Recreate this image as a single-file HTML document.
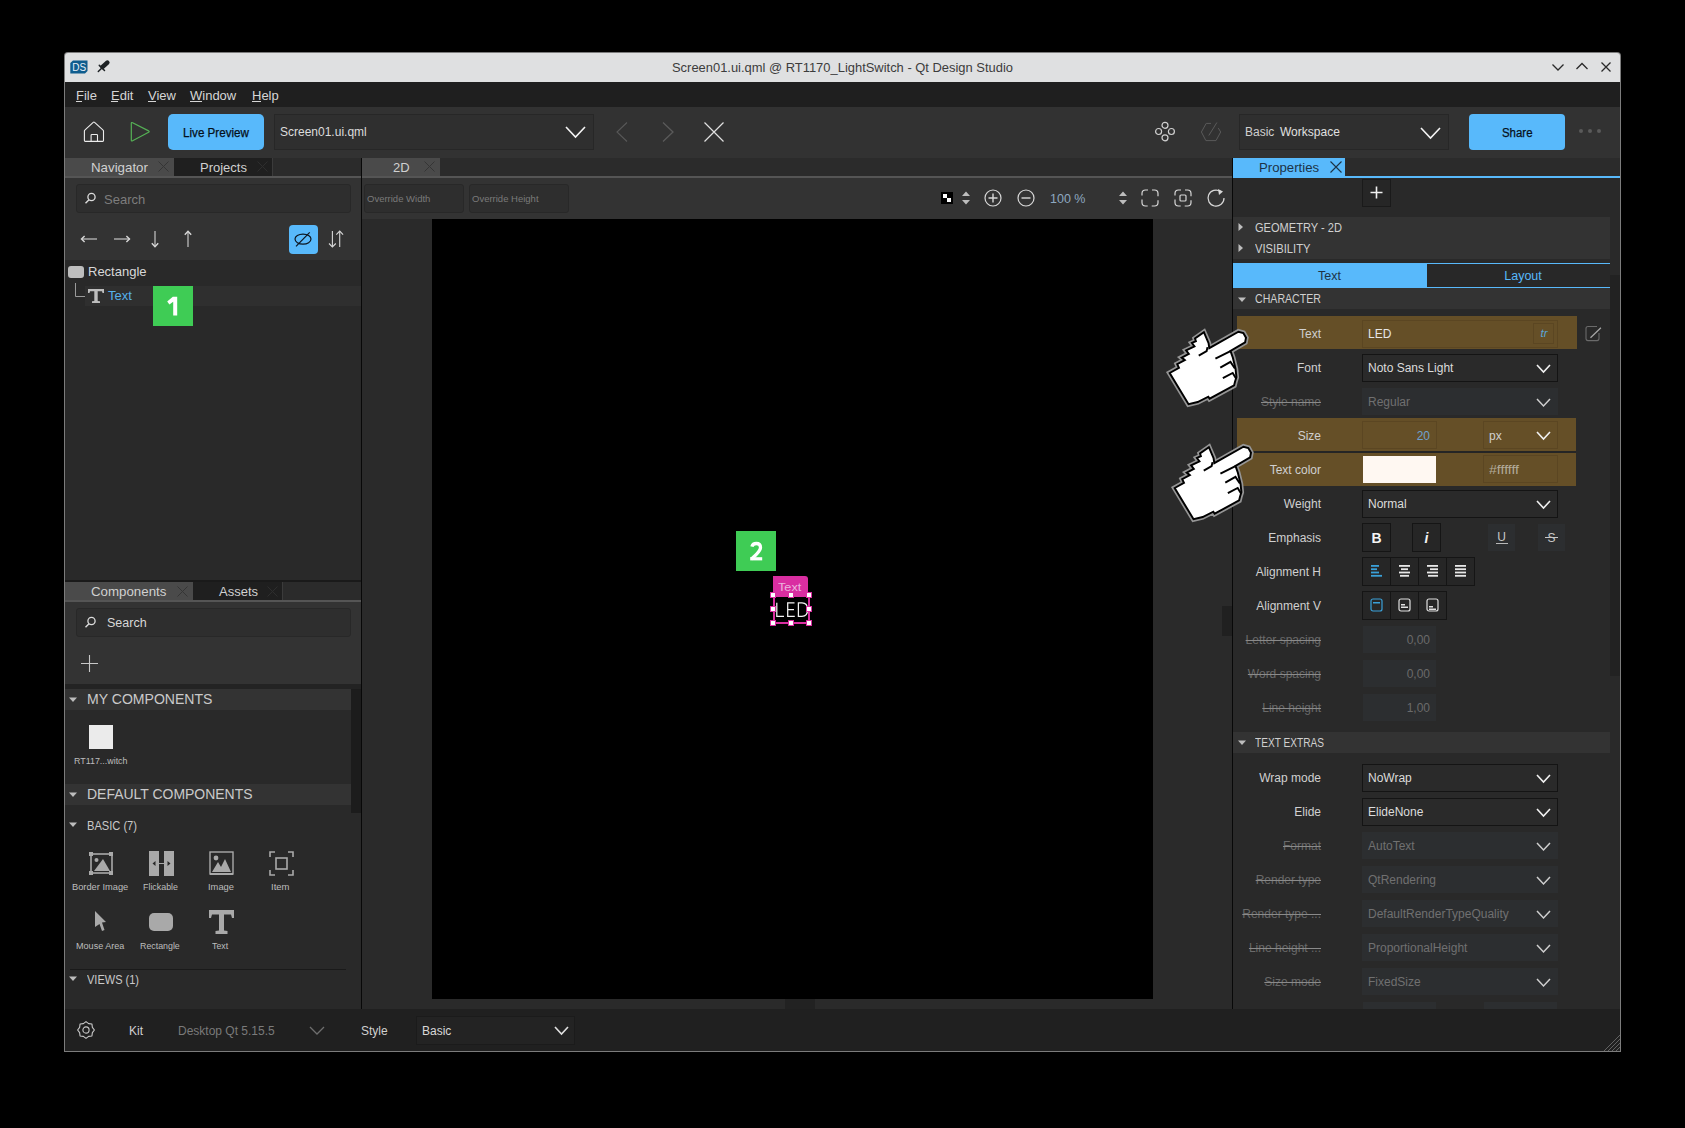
<!DOCTYPE html>
<html><head><meta charset="utf-8">
<style>
*{box-sizing:border-box;margin:0;padding:0}
html,body{width:1685px;height:1128px;overflow:hidden;background:#000;font-family:"Liberation Sans",sans-serif;font-size:12px;color:#d6d6d6}
.a{position:absolute}
.t{position:absolute;white-space:pre;line-height:1}
svg.a{overflow:visible}
</style></head><body>
<div class="a" style="left:64px;top:52px;width:1557px;height:1000px;background:#7c7c7c;border-radius:4px 4px 0 0"></div>
<div class="a" style="left:65px;top:53px;width:1555px;height:29px;background:#dfe0e1;border-radius:3px 3px 0 0"></div>
<svg class="a" style="left:70px;top:60px" width="18" height="14" viewBox="0 0 18 14"><path d="M3,0.5 L17.5,0.5 L17.5,11 L15,13.5 L0.3,13.5 L0.3,3 Z" fill="#0f5d8e"/><text x="9.2" y="10.8" font-family="Liberation Sans" font-size="10" fill="#e8f0f8" text-anchor="middle">DS</text></svg>
<svg class="a" style="left:97px;top:60px;" width="14" height="14" viewBox="0 0 14 14"><path d="M5.6,6.9 L10.3,2.6" stroke="#1e2225" stroke-width="4.6" stroke-linecap="round"/><path d="M2.3,5.4 L7.5,10.5 M1.3,11.5 L4.6,8.2" stroke="#1e2225" stroke-width="1.5" stroke-linecap="round"/></svg>
<div class="t" style="left:672px;top:61.3px;font-size:13px;color:#3c3c3c;transform:scaleX(0.9943);transform-origin:left;">Screen01.ui.qml @ RT1170_LightSwitch - Qt Design Studio</div>
<svg class="a" style="left:1550px;top:62px;" width="16" height="10" viewBox="0 0 16 10"><polyline points="2.5,2.5 8,8 13.5,2.5" fill="none" stroke="#2a2a2a" stroke-width="1.3"/></svg>
<svg class="a" style="left:1574px;top:61px;" width="16" height="10" viewBox="0 0 16 10"><polyline points="2.5,8 8,2.5 13.5,8" fill="none" stroke="#2a2a2a" stroke-width="1.3"/></svg>
<svg class="a" style="left:1599px;top:60px;" width="14" height="14" viewBox="0 0 14 14"><path d="M2.5,2.5 L11.5,11.5 M11.5,2.5 L2.5,11.5" fill="none" stroke="#2a2a2a" stroke-width="1.3"/></svg>
<div class="a" style="left:65px;top:82px;width:1555px;height:25px;background:#1f1f1f;"></div>
<div class="t" style="left:76px;top:89.0px;font-size:13px;color:#d6d6d6;">File</div>
<div class="a" style="left:76px;top:101px;width:6px;height:1px;background:#d6d6d6;"></div>
<div class="t" style="left:111px;top:89.0px;font-size:13px;color:#d6d6d6;">Edit</div>
<div class="a" style="left:111px;top:101px;width:7px;height:1px;background:#d6d6d6;"></div>
<div class="t" style="left:148px;top:89.0px;font-size:13px;color:#d6d6d6;">View</div>
<div class="a" style="left:148px;top:101px;width:8px;height:1px;background:#d6d6d6;"></div>
<div class="t" style="left:190px;top:89.0px;font-size:13px;color:#d6d6d6;">Window</div>
<div class="a" style="left:190px;top:101px;width:12px;height:1px;background:#d6d6d6;"></div>
<div class="t" style="left:252px;top:89.0px;font-size:13px;color:#d6d6d6;">Help</div>
<div class="a" style="left:252px;top:101px;width:9px;height:1px;background:#d6d6d6;"></div>
<div class="a" style="left:65px;top:107px;width:1555px;height:51px;background:#323232;"></div>
<svg class="a" style="left:83px;top:121px;" width="22" height="22" viewBox="0 0 22 22"><path d="M1.4,19.6 L1.4,10 Q1.4,9.5 1.8,9.2 L10.2,1.3 Q10.9,0.7 11.6,1.3 L20.1,9.2 Q20.5,9.5 20.5,10 L20.5,19.6 Q20.5,20.4 19.7,20.4 L2.2,20.4 Q1.4,20.4 1.4,19.6 Z" fill="none" stroke="#ececec" stroke-width="1.1"/><path d="M8.1,20.4 L8.1,14.3 Q8.1,13.5 8.9,13.5 L13.7,13.5 Q14.5,13.5 14.5,14.3 L14.5,20.4" fill="none" stroke="#ececec" stroke-width="1.1"/></svg>
<svg class="a" style="left:129px;top:121px;" width="22" height="22" viewBox="0 0 22 22"><path d="M2.3,2.5 Q2.3,1 3.6,1.7 L19.6,9.9 Q20.8,10.6 19.6,11.3 L3.6,19.8 Q2.3,20.5 2.3,19 Z" fill="none" stroke="#55b055" stroke-width="1.2"/></svg>
<div class="a" style="left:168px;top:114px;width:96px;height:36px;background:#58b9fb;border-radius:5px"></div>
<div class="t" style="left:183px;top:126.84px;font-size:12px;color:#06101a;-webkit-text-stroke:0.25px #06101a;transform:scaleX(0.9702);transform-origin:left;">Live Preview</div>
<div class="a" style="left:274px;top:114px;width:320px;height:36px;background:#2f2f2f;border:1px solid #272727;border-radius:0px;"></div>
<div class="t" style="left:280px;top:125.84px;font-size:12px;color:#dcdcdc;">Screen01.ui.qml</div>
<svg class="a" style="left:564.0px;top:125.30000000000001px;" width="23" height="14" viewBox="0 0 23 14"><polyline points="2,2 11.5,12 21,2" fill="none" stroke="#f4f4f4" stroke-width="1.6"/></svg>
<svg class="a" style="left:614px;top:121px;" width="16" height="22" viewBox="0 0 16 22"><polyline points="13,1.5 3,11 13,20.5" fill="none" stroke="#585858" stroke-width="1.1"/></svg>
<svg class="a" style="left:660px;top:121px;" width="16" height="22" viewBox="0 0 16 22"><polyline points="3,1.5 13,11 3,20.5" fill="none" stroke="#5a5a5a" stroke-width="1.3"/></svg>
<svg class="a" style="left:703px;top:121px;" width="22" height="22" viewBox="0 0 22 22"><path d="M1.5,1.5 L20.5,20.5 M20.5,1.5 L1.5,20.5" stroke="#e0e0e0" stroke-width="1.2"/></svg>
<svg class="a" style="left:1154px;top:120px;" width="22" height="22" viewBox="0 0 22 22"><g fill="none" stroke="#d0d0d0" stroke-width="1.2"><circle cx="11" cy="5.3" r="3"/><circle cx="4.6" cy="11.5" r="3"/><circle cx="17.4" cy="11.5" r="3"/><circle cx="11" cy="17.8" r="3"/></g></svg>
<svg class="a" style="left:1200px;top:120px;" width="22" height="22" viewBox="0 0 22 22"><g fill="none" stroke="#5a5a5a" stroke-width="1"><path d="M11,3.4 L6.2,3.4 L1.4,12 L5.9,20.6 L16,20.6 L20.7,12 L18.3,8.1"/><path d="M8.8,15.5 L16.9,2.5"/></g></svg>
<div class="a" style="left:1239px;top:114px;width:210px;height:36px;background:#2f2f2f;border:1px solid #272727;border-radius:0px;"></div>
<div class="t" style="left:1245px;top:125.84px;font-size:12px;color:#cfcfcf;">Basic</div>
<div class="t" style="left:1280px;top:125.84px;font-size:12px;color:#e0e0e0;">Workspace</div>
<svg class="a" style="left:1419.0px;top:125.80000000000001px;" width="23" height="14" viewBox="0 0 23 14"><polyline points="2,2 11.5,12 21,2" fill="none" stroke="#f4f4f4" stroke-width="1.6"/></svg>
<div class="a" style="left:1469px;top:114px;width:96px;height:36px;background:#58b9fb;border-radius:4px"></div>
<div class="t" style="left:1502px;top:126.84px;font-size:12px;color:#06101a;-webkit-text-stroke:0.25px #06101a;transform:scaleX(0.9524);transform-origin:left;">Share</div>
<div class="a" style="left:1579px;top:129px;width:4px;height:4px;background:#5a5a5a;border-radius:2px"></div>
<div class="a" style="left:1588px;top:129px;width:4px;height:4px;background:#5a5a5a;border-radius:2px"></div>
<div class="a" style="left:1597px;top:129px;width:4px;height:4px;background:#5a5a5a;border-radius:2px"></div>
<div class="a" style="left:65px;top:1009px;width:1555px;height:42px;background:#202020;"></div>
<svg class="a" style="left:75.5px;top:1020.3px;" width="20" height="20" viewBox="0 0 20 20"><g fill="none" stroke="#c8c8c8" stroke-width="1.1" stroke-linejoin="round"><polygon points="10.00,1.60 12.64,3.63 15.94,4.06 16.37,7.36 18.40,10.00 16.37,12.64 15.94,15.94 12.64,16.37 10.00,18.40 7.36,16.37 4.06,15.94 3.63,12.64 1.60,10.00 3.63,7.36 4.06,4.06 7.36,3.63"/><circle cx="10" cy="10" r="3.1"/></g></svg>
<div class="t" style="left:129px;top:1024.84px;font-size:12px;color:#d0d0d0;">Kit</div>
<div class="t" style="left:178px;top:1024.84px;font-size:12px;color:#7a7a7a;">Desktop Qt 5.15.5</div>
<svg class="a" style="left:308.0px;top:1024.5px;" width="18" height="11" viewBox="0 0 18 11"><polyline points="2,2 9.0,9 16,2" fill="none" stroke="#6e6e6e" stroke-width="1.3"/></svg>
<div class="t" style="left:361px;top:1024.84px;font-size:12px;color:#d0d0d0;">Style</div>
<div class="a" style="left:416px;top:1016px;width:159px;height:29px;background:#232323;border:1px solid #1b1b1b;border-radius:0px;"></div>
<div class="t" style="left:422px;top:1024.84px;font-size:12px;color:#d8d8d8;">Basic</div>
<svg class="a" style="left:552.5px;top:1024.5px;" width="17" height="11" viewBox="0 0 17 11"><polyline points="2,2 8.5,9 15,2" fill="none" stroke="#e0e0e0" stroke-width="1.6"/></svg>
<div class="a" style="left:65px;top:158px;width:296px;height:18px;background:#2b2b2b;"></div>
<div class="a" style="left:65px;top:158px;width:109px;height:18px;background:#4a4a4a;"></div>
<div class="a" style="left:174px;top:158px;width:98px;height:18px;background:#1f1f1f;"></div>
<div class="a" style="left:272px;top:158px;width:1px;height:18px;background:#3b3b3b;"></div>
<div class="t" style="left:91px;top:160.74px;font-size:13.3px;color:#d0d0d0;">Navigator</div>
<svg class="a" style="left:158px;top:161px;" width="11" height="11" viewBox="0 0 11 11"><path d="M0.5,0.5 L10.5,10.5 M10.5,0.5 L0.5,10.5" stroke="#353535" stroke-width="1"/></svg>
<div class="t" style="left:200px;top:161.0px;font-size:13px;color:#d0d0d0;">Projects</div>
<svg class="a" style="left:257px;top:161px;" width="11" height="11" viewBox="0 0 11 11"><path d="M0.5,0.5 L10.5,10.5 M10.5,0.5 L0.5,10.5" stroke="#2e2e2e" stroke-width="1"/></svg>
<div class="a" style="left:65px;top:176px;width:296px;height:2px;background:#555;"></div>
<div class="a" style="left:65px;top:178px;width:296px;height:82px;background:#333;"></div>
<div class="a" style="left:76px;top:184px;width:275px;height:29px;background:#2e2e2e;border:1px solid #282828;border-radius:3px;"></div>
<svg class="a" style="left:84px;top:192px;" width="13" height="13" viewBox="0 0 13 13"><circle cx="7.5" cy="5" r="3.6" fill="none" stroke="#dcdcdc" stroke-width="1.3"/><path d="M5,7.8 L1.5,11.3" stroke="#dcdcdc" stroke-width="1.4"/></svg>
<div class="t" style="left:104px;top:193.0px;font-size:13px;color:#7d7d7d;">Search</div>
<svg class="a" style="left:75px;top:229px;" width="30" height="20" viewBox="0 0 30 20"><path d="M7,10 L22,10" stroke="#a8a8a8" stroke-width="1.5"/><polyline points="9.6,7 6.5,10 9.6,13" fill="none" stroke="#d8d8d8" stroke-width="1.4"/></svg>
<svg class="a" style="left:108px;top:229px;" width="30" height="20" viewBox="0 0 30 20"><path d="M6,10 L21.5,10" stroke="#a8a8a8" stroke-width="1.5"/><polyline points="18.4,7 21.5,10 18.4,13" fill="none" stroke="#d8d8d8" stroke-width="1.4"/></svg>
<svg class="a" style="left:145px;top:225px;" width="20" height="30" viewBox="0 0 20 30"><path d="M10,6 L10,21.5" stroke="#a8a8a8" stroke-width="1.5"/><polyline points="6.8,18.3 10,21.8 13.2,18.3" fill="none" stroke="#d8d8d8" stroke-width="1.4"/></svg>
<svg class="a" style="left:178px;top:225px;" width="20" height="30" viewBox="0 0 20 30"><path d="M10,6.5 L10,22" stroke="#a8a8a8" stroke-width="1.5"/><polyline points="6.8,9.7 10,6.2 13.2,9.7" fill="none" stroke="#d8d8d8" stroke-width="1.4"/></svg>
<div class="a" style="left:289px;top:225px;width:29px;height:29px;background:#58b9fb;border-radius:4px"></div>
<svg class="a" style="left:289px;top:225px;" width="29" height="29" viewBox="0 0 29 29"><ellipse cx="14" cy="14.1" rx="8" ry="5" fill="none" stroke="#0d1620" stroke-width="1.2"/><path d="M7,21.4 L20.7,7.3" stroke="#0d1620" stroke-width="1.2"/></svg>
<svg class="a" style="left:326px;top:230px;" width="20" height="19" viewBox="0 0 20 19"><g fill="none" stroke="#d8d8d8" stroke-width="1.1"><path d="M6.4,1 L6.4,17"/><polyline points="3,13.5 6.4,17 9.8,13.5"/><path d="M13.7,1.2 L13.7,17"/><polyline points="10.3,4.6 13.7,1.1 17.1,4.6"/></g></svg>
<div class="a" style="left:65px;top:260px;width:296px;height:320px;background:#292929;"></div>
<div class="a" style="left:68px;top:266px;width:16px;height:12px;background:#bdbdbd;border-radius:3px"></div>
<div class="t" style="left:88px;top:265.0px;font-size:13px;color:#d8d8d8;">Rectangle</div>
<div class="a" style="left:85px;top:286px;width:276px;height:20px;background:#2f2f2f;"></div>
<svg class="a" style="left:74px;top:283px;" width="12" height="15" viewBox="0 0 12 15"><path d="M1.5,0 L1.5,13.5 L11,13.5" fill="none" stroke="#9a9a9a" stroke-width="1"/></svg>
<svg class="a" style="left:87px;top:288px;" width="18" height="16" viewBox="0 0 18 16"><path d="M1,1 L17,1 L17,5 L15.5,5 L15,3.3 L10.7,3.3 L10.7,13 L13,13.3 L13,15 L5,15 L5,13.3 L7.3,13 L7.3,3.3 L3,3.3 L2.5,5 L1,5 Z" fill="#bdbdbd"/></svg>
<div class="t" style="left:108px;top:289.0px;font-size:13px;color:#56b0ea;">Text</div>
<div class="a" style="left:65px;top:580px;width:296px;height:2px;background:#1a1a1a;"></div>
<div class="a" style="left:65px;top:582px;width:296px;height:18px;background:#2b2b2b;"></div>
<div class="a" style="left:65px;top:582px;width:128px;height:18px;background:#4a4a4a;"></div>
<div class="a" style="left:193px;top:582px;width:89px;height:18px;background:#1f1f1f;"></div>
<div class="a" style="left:282px;top:582px;width:1px;height:18px;background:#3b3b3b;"></div>
<div class="t" style="left:91px;top:584.74px;font-size:13.3px;color:#d0d0d0;">Components</div>
<svg class="a" style="left:177px;top:586px;" width="11" height="11" viewBox="0 0 11 11"><path d="M0.5,0.5 L10.5,10.5 M10.5,0.5 L0.5,10.5" stroke="#353535" stroke-width="1"/></svg>
<div class="t" style="left:219px;top:585.0px;font-size:13px;color:#d0d0d0;">Assets</div>
<svg class="a" style="left:267px;top:586px;" width="11" height="11" viewBox="0 0 11 11"><path d="M0.5,0.5 L10.5,10.5 M10.5,0.5 L0.5,10.5" stroke="#2e2e2e" stroke-width="1"/></svg>
<div class="a" style="left:65px;top:600px;width:296px;height:2px;background:#555;"></div>
<div class="a" style="left:65px;top:602px;width:296px;height:82px;background:#333;"></div>
<div class="a" style="left:76px;top:608px;width:275px;height:29px;background:#2e2e2e;border:1px solid #282828;border-radius:3px;"></div>
<svg class="a" style="left:84px;top:616px;" width="13" height="13" viewBox="0 0 13 13"><circle cx="7.5" cy="5" r="3.6" fill="none" stroke="#dcdcdc" stroke-width="1.3"/><path d="M5,7.8 L1.5,11.3" stroke="#dcdcdc" stroke-width="1.4"/></svg>
<div class="t" style="left:107px;top:616.92px;font-size:12.5px;color:#d8d8d8;">Search</div>
<svg class="a" style="left:80px;top:654px;" width="19" height="19" viewBox="0 0 19 19"><path d="M9.5,1 L9.5,18 M1,9.5 L18,9.5" stroke="#c8c8c8" stroke-width="1.1"/></svg>
<div class="a" style="left:65px;top:684px;width:296px;height:5px;background:#232323;"></div>
<div class="a" style="left:65px;top:689px;width:296px;height:320px;background:#292929;"></div>
<div class="a" style="left:351px;top:689px;width:10px;height:124px;background:#1c1c1c;"></div>
<div class="a" style="left:65px;top:689px;width:286px;height:21px;background:#333;"></div>
<svg class="a" style="left:69px;top:697px;" width="9" height="6" viewBox="0 0 9 6"><path d="M0,0.5 L8,0.5 L4,5 Z" fill="#bdbdbd"/></svg>
<div class="t" style="left:87px;top:692.23px;font-size:14.5px;color:#cacaca;transform:scaleX(0.9695);transform-origin:left;">MY COMPONENTS</div>
<div class="a" style="left:89px;top:725px;width:24px;height:24px;background:#ebebeb;"></div>
<div class="t" style="left:74px;top:755.96px;font-size:9.5px;color:#bdbdbd;transform:scaleX(0.9353);transform-origin:left;">RT117...witch</div>
<div class="a" style="left:65px;top:784px;width:286px;height:21px;background:#333;"></div>
<svg class="a" style="left:69px;top:792px;" width="9" height="6" viewBox="0 0 9 6"><path d="M0,0.5 L8,0.5 L4,5 Z" fill="#bdbdbd"/></svg>
<div class="t" style="left:87px;top:787.23px;font-size:14.5px;color:#cacaca;transform:scaleX(0.9629);transform-origin:left;">DEFAULT COMPONENTS</div>
<svg class="a" style="left:69px;top:822px;" width="9" height="6" viewBox="0 0 9 6"><path d="M0,0.5 L8,0.5 L4,5 Z" fill="#bdbdbd"/></svg>
<div class="t" style="left:87px;top:819.66px;font-size:12.8px;color:#cacaca;transform:scaleX(0.8678);transform-origin:left;">BASIC (7)</div>
<svg class="a" style="left:89px;top:851px;" width="25" height="25" viewBox="0 0 25 25"><g fill="#a9a9a9"><rect x="2" y="3" width="21" height="19" fill="none" stroke="#a9a9a9" stroke-width="1.6"/><rect x="0" y="1" width="4" height="4"/><rect x="20" y="1" width="4" height="4"/><rect x="0" y="20" width="4" height="4"/><rect x="20" y="20" width="4" height="4"/><circle cx="7.5" cy="9" r="2"/><path d="M5,20 L14,8 L21,20 Z"/></g></svg>
<svg class="a" style="left:149px;top:851px;" width="25" height="25" viewBox="0 0 25 25"><g fill="#a9a9a9"><rect x="0" y="0" width="10" height="25"/><rect x="15" y="0" width="10" height="25"/></g><path d="M3.5,12.5 L6.5,10 L6.5,15 Z M21.5,12.5 L18.5,10 L18.5,15 Z" fill="#292929"/><path d="M9.5,12.5 L15.5,12.5" stroke="#a9a9a9" stroke-width="1"/></svg>
<svg class="a" style="left:209px;top:851px;" width="25" height="25" viewBox="0 0 25 25"><g><rect x="1" y="1" width="23" height="22" fill="none" stroke="#a9a9a9" stroke-width="1.4"/><circle cx="7" cy="7" r="2.4" fill="#a9a9a9"/><path d="M3,21 L9,11 L12,16 L16,8 L22,21 Z" fill="#a9a9a9"/><rect x="1" y="22" width="23" height="2" fill="#a9a9a9"/></g></svg>
<svg class="a" style="left:269px;top:851px;" width="25" height="25" viewBox="0 0 25 25"><g fill="none" stroke="#a9a9a9" stroke-width="1.6"><path d="M1,6 L1,1 L6,1 M19,1 L24,1 L24,6 M24,19 L24,24 L19,24 M6,24 L1,24 L1,19"/><rect x="7" y="7" width="11" height="11"/></g></svg>
<div class="t" style="left:72.4px;top:881.87px;font-size:9.6px;color:#bdbdbd;transform:scaleX(0.9679);transform-origin:left;">Border Image</div>
<div class="t" style="left:143px;top:881.87px;font-size:9.6px;color:#bdbdbd;transform:scaleX(0.9239);transform-origin:left;">Flickable</div>
<div class="t" style="left:207.5px;top:881.87px;font-size:9.6px;color:#bdbdbd;transform:scaleX(0.9744);transform-origin:left;">Image</div>
<div class="t" style="left:271px;top:881.87px;font-size:9.6px;color:#bdbdbd;transform:scaleX(0.9909);transform-origin:left;">Item</div>
<svg class="a" style="left:94px;top:910px;" width="14" height="24" viewBox="0 0 14 24"><path d="M1,1 L12,12 L8,12.5 L10.5,20 L8,21 L5.5,14 L1,17 Z" fill="#a9a9a9"/></svg>
<div class="a" style="left:149px;top:913px;width:24px;height:18px;background:#a9a9a9;border-radius:5px"></div>
<svg class="a" style="left:209px;top:910px;" width="25" height="24" viewBox="0 0 25 24"><path d="M0,0 L25,0 L25,8 L23,8 L22,4.5 L15,4.5 L15,20.5 L18.5,21 L18.5,24 L6.5,24 L6.5,21 L10,20.5 L10,4.5 L3,4.5 L2,8 L0,8 Z" fill="#a9a9a9"/></svg>
<div class="t" style="left:76px;top:940.87px;font-size:9.6px;color:#bdbdbd;transform:scaleX(0.9447);transform-origin:left;">Mouse Area</div>
<div class="t" style="left:140.4px;top:940.87px;font-size:9.6px;color:#bdbdbd;transform:scaleX(0.9207);transform-origin:left;">Rectangle</div>
<div class="t" style="left:212.3px;top:940.87px;font-size:9.6px;color:#bdbdbd;transform:scaleX(0.9144);transform-origin:left;">Text</div>
<div class="a" style="left:70px;top:969px;width:276px;height:1px;background:#1a1a1a;"></div>
<svg class="a" style="left:69px;top:976px;" width="9" height="6" viewBox="0 0 9 6"><path d="M0,0.5 L8,0.5 L4,5 Z" fill="#bdbdbd"/></svg>
<div class="t" style="left:87px;top:973.66px;font-size:12.8px;color:#cacaca;transform:scaleX(0.8602);transform-origin:left;">VIEWS (1)</div>
<div class="a" style="left:361px;top:158px;width:1px;height:851px;background:#080808;"></div>
<div class="a" style="left:362px;top:158px;width:870px;height:18px;background:#2b2b2b;"></div>
<div class="a" style="left:362px;top:158px;width:78px;height:18px;background:#4a4a4a;"></div>
<div class="t" style="left:393px;top:161.0px;font-size:13px;color:#d0d0d0;">2D</div>
<svg class="a" style="left:424px;top:161px;" width="11" height="11" viewBox="0 0 11 11"><path d="M0.5,0.5 L10.5,10.5 M10.5,0.5 L0.5,10.5" stroke="#353535" stroke-width="1"/></svg>
<div class="a" style="left:362px;top:176px;width:870px;height:2px;background:#555;"></div>
<div class="a" style="left:362px;top:178px;width:870px;height:41px;background:#333;"></div>
<div class="a" style="left:364px;top:184px;width:100px;height:29px;background:#2e2e2e;border:1px solid #282828;border-radius:3px;"></div>
<div class="a" style="left:469px;top:184px;width:100px;height:29px;background:#2e2e2e;border:1px solid #282828;border-radius:3px;"></div>
<div class="t" style="left:367px;top:193.96px;font-size:9.5px;color:#7a7a7a;">Override Width</div>
<div class="t" style="left:472px;top:193.96px;font-size:9.5px;color:#7a7a7a;">Override Height</div>
<div class="a" style="left:941px;top:192px;width:12px;height:12px;background:#000;"></div>
<div class="a" style="left:943px;top:194px;width:4px;height:4px;background:#fff;"></div>
<div class="a" style="left:947px;top:198px;width:4px;height:4px;background:#fff;"></div>
<svg class="a" style="left:960.5px;top:190px;" width="10" height="16" viewBox="0 0 10 16"><path d="M1,6 L5,1.5 L9,6 Z M1,10 L5,14.5 L9,10 Z" fill="#bdbdbd"/></svg>
<svg class="a" style="left:983px;top:188px;" width="20" height="20" viewBox="0 0 20 20"><circle cx="10" cy="10" r="8" fill="none" stroke="#d8d8d8" stroke-width="1.2"/><path d="M10,5.5 L10,14.5 M5.5,10 L14.5,10" stroke="#d8d8d8" stroke-width="1.4"/></svg>
<svg class="a" style="left:1016px;top:188px;" width="20" height="20" viewBox="0 0 20 20"><circle cx="10" cy="10" r="8" fill="none" stroke="#d8d8d8" stroke-width="1.2"/><path d="M5.5,10 L14.5,10" stroke="#d8d8d8" stroke-width="1.4"/></svg>
<div class="t" style="left:1050px;top:193.42px;font-size:12.5px;color:#8ea8c0;">100 %</div>
<svg class="a" style="left:1117.5px;top:190px;" width="10" height="16" viewBox="0 0 10 16"><path d="M1,6 L5,1.5 L9,6 Z M1,10 L5,14.5 L9,10 Z" fill="#bdbdbd"/></svg>
<svg class="a" style="left:1140px;top:188px;" width="20" height="20" viewBox="0 0 20 20"><rect x="2" y="2" width="16" height="16" rx="3.5" fill="none" stroke="#d8d8d8" stroke-width="1.2" stroke-dasharray="10.5,4" stroke-dashoffset="8"/></svg>
<svg class="a" style="left:1173px;top:188px;" width="20" height="20" viewBox="0 0 20 20"><rect x="2" y="2" width="16" height="16" rx="3.5" fill="none" stroke="#d8d8d8" stroke-width="1.2" stroke-dasharray="10.5,4" stroke-dashoffset="8"/><rect x="7" y="7" width="6" height="6" rx="1" fill="none" stroke="#d8d8d8" stroke-width="1.2"/></svg>
<svg class="a" style="left:1206px;top:188px;" width="20" height="20" viewBox="0 0 20 20"><path d="M14.5,3.5 A8,8 0 1 0 18,10" fill="none" stroke="#d8d8d8" stroke-width="1.2"/><path d="M12,1 L17,3.5 L13,7 Z" fill="#d8d8d8"/></svg>
<div class="a" style="left:362px;top:219px;width:870px;height:790px;background:#2a2a2a;"></div>
<div class="a" style="left:432px;top:219px;width:721px;height:780px;background:#000;"></div>
<div class="a" style="left:785px;top:999px;width:30px;height:10px;background:#222;"></div>
<div class="a" style="left:1222px;top:606px;width:10px;height:30px;background:#202020;"></div>
<div class="a" style="left:736px;top:531px;width:40px;height:40px;background:#3fcc55;"></div>
<svg class="a" style="left:736px;top:531px;" width="40" height="40" viewBox="0 0 40 40"><path d="M15.9,15.6 C16.5,13.3 18.3,12.5 20.3,12.5 C23,12.5 24.5,14.3 24.5,16.6 C24.5,18.9 23.2,20.5 20.6,23.1 L15.6,28" fill="none" stroke="#fff" stroke-width="3.3"/><rect x="14.2" y="26.2" width="12" height="3.2" fill="#fff"/></svg>
<div class="a" style="left:773px;top:576px;width:35px;height:19px;background:#d92ea1;border-radius:0 3px 0 0"></div>
<div class="t" style="left:777.5px;top:581.69px;font-size:11px;color:#ecb4de;transform:scaleX(1.1550);transform-origin:left;">Text</div>
<svg class="a" style="left:770px;top:598px;" width="45" height="24" viewBox="0 0 45 24"><g fill="none" stroke="#f4f4f4" stroke-width="1.25"><path d="M6.8,4.8 L6.8,18.4 L14,18.4"/><path d="M24.5,4.8 L17.7,4.8 L17.7,18.4 L24.8,18.4 M17.7,11.6 L24,11.6"/><path d="M28.4,4.8 L28.4,18.4 L32,18.4 Q37.6,18.4 37.6,11.6 Q37.6,4.8 32,4.8 Z"/></g></svg>
<div class="a" style="left:773px;top:595px;width:37px;height:29px;background:transparent;border:2px solid #d92ea1"></div>
<div class="a" style="left:770px;top:592px;width:6px;height:6px;background:#fff;border:1px solid #d92ea1"></div>
<div class="a" style="left:770px;top:606px;width:6px;height:6px;background:#fff;border:1px solid #d92ea1"></div>
<div class="a" style="left:770px;top:620px;width:6px;height:6px;background:#fff;border:1px solid #d92ea1"></div>
<div class="a" style="left:788px;top:592px;width:6px;height:6px;background:#fff;border:1px solid #d92ea1"></div>
<div class="a" style="left:788px;top:620px;width:6px;height:6px;background:#fff;border:1px solid #d92ea1"></div>
<div class="a" style="left:806px;top:592px;width:6px;height:6px;background:#fff;border:1px solid #d92ea1"></div>
<div class="a" style="left:806px;top:606px;width:6px;height:6px;background:#fff;border:1px solid #d92ea1"></div>
<div class="a" style="left:806px;top:620px;width:6px;height:6px;background:#fff;border:1px solid #d92ea1"></div>
<div class="a" style="left:153px;top:286px;width:40px;height:40px;background:#3fcc55;"></div>
<svg class="a" style="left:153px;top:286px;" width="40" height="40" viewBox="0 0 40 40"><polygon points="19.8,10.8 24.2,10.8 24.2,29.6 20.2,29.6 20.2,15.8 16.4,18.6 14.2,15.6" fill="#fff"/></svg>
<div class="a" style="left:1232px;top:158px;width:1px;height:851px;background:#080808;"></div>
<div class="a" style="left:1233px;top:158px;width:387px;height:18px;background:#2b2b2b;"></div>
<div class="a" style="left:1233px;top:158px;width:112px;height:18px;background:#58b9fb;"></div>
<div class="t" style="left:1259px;top:160.83px;font-size:13.2px;color:#1d3346;">Properties</div>
<svg class="a" style="left:1330px;top:161px;" width="12" height="12" viewBox="0 0 12 12"><path d="M0.5,0.5 L11.5,11.5 M11.5,0.5 L0.5,11.5" stroke="#1d3346" stroke-width="1.1"/></svg>
<div class="a" style="left:1233px;top:176px;width:387px;height:2px;background:#58b9fb;"></div>
<div class="a" style="left:1233px;top:178px;width:387px;height:831px;background:#292929;"></div>
<div class="a" style="left:1362px;top:179px;width:29px;height:28px;background:#262626;border:1px solid #1a1a1a;border-radius:0px;"></div>
<svg class="a" style="left:1369px;top:185px;" width="15" height="15" viewBox="0 0 15 15"><path d="M7.5,1.5 L7.5,13.5 M1.5,7.5 L13.5,7.5" stroke="#f0f0f0" stroke-width="1.6"/></svg>
<div class="a" style="left:1233px;top:217px;width:377px;height:42px;background:#333;"></div>
<svg class="a" style="left:1238px;top:223px;" width="6" height="9" viewBox="0 0 6 9"><path d="M0.5,0 L5,4 L0.5,8 Z" fill="#bdbdbd"/></svg>
<div class="t" style="left:1255px;top:221.21px;font-size:13.1px;color:#d0d0d0;transform:scaleX(0.8456);transform-origin:left;">GEOMETRY - 2D</div>
<svg class="a" style="left:1238px;top:244px;" width="6" height="9" viewBox="0 0 6 9"><path d="M0.5,0 L5,4 L0.5,8 Z" fill="#bdbdbd"/></svg>
<div class="t" style="left:1255px;top:241.91px;font-size:13.1px;color:#d0d0d0;transform:scaleX(0.8565);transform-origin:left;">VISIBILITY</div>
<div class="a" style="left:1233px;top:263px;width:377px;height:1px;background:#58b9fb;"></div>
<div class="a" style="left:1233px;top:263px;width:194px;height:25px;background:#58b9fb;"></div>
<div class="a" style="left:1427px;top:264px;width:183px;height:23px;background:#282828;"></div>
<div class="a" style="left:1233px;top:287px;width:377px;height:1px;background:#58b9fb;"></div>
<div class="t" style="left:1029.5px;width:600px;text-align:center;top:270.02px;font-size:12.5px;color:#1d3346;">Text</div>
<div class="t" style="left:1223px;width:600px;text-align:center;top:270.02px;font-size:12.5px;color:#58b9fb;">Layout</div>
<div class="a" style="left:1233px;top:288px;width:377px;height:21px;background:#333;"></div>
<svg class="a" style="left:1238px;top:297px;" width="9" height="6" viewBox="0 0 9 6"><path d="M0,0.5 L8,0.5 L4,5 Z" fill="#bdbdbd"/></svg>
<div class="t" style="left:1255px;top:292.21px;font-size:13.1px;color:#d0d0d0;transform:scaleX(0.8096);transform-origin:left;">CHARACTER</div>
<div class="a" style="left:1610px;top:275px;width:10px;height:401px;background:#222;"></div>
<div class="a" style="left:1237px;top:316px;width:340px;height:33px;background:#654f27;"></div>
<div class="t" style="right:364px;top:328.34px;font-size:12px;color:#d0d0d0;">Text</div>
<div class="a" style="left:1362px;top:320px;width:196px;height:28px;background:#654f27;border:1px solid #5b4622;border-radius:0px;"></div>
<div class="t" style="left:1368px;top:328.34px;font-size:12px;color:#e6e6e6;">LED</div>
<div class="a" style="left:1533px;top:323px;width:21px;height:21px;background:#654f27;border:1px solid #5b4622;border-radius:0px;"></div>
<div class="t" style="left:1244px;width:600px;text-align:center;top:327.77px;font-size:11.5px;color:#5aa6d8;font-style:italic">tr</div>
<svg class="a" style="left:1584px;top:324px;" width="20" height="20" viewBox="0 0 20 20"><path d="M15,9 L15,14.6 Q15,16.6 13,16.6 L4,16.6 Q2,16.6 2,14.6 L2,4.5 Q2,2.5 4,2.5 L13,2.5" fill="none" stroke="#6a6a6a" stroke-width="1.1"/><path d="M6.5,13.7 L16.9,3.8" stroke="#a8a8a8" stroke-width="1.2"/></svg>
<div class="t" style="right:364px;top:362.34px;font-size:12px;color:#d0d0d0;">Font</div>
<div class="a" style="left:1362px;top:354px;width:196px;height:28px;background:#2a2a2a;border:1px solid #141414;border-radius:0px;"></div>
<div class="t" style="left:1368px;top:362.34px;font-size:12px;color:#dcdcdc;">Noto Sans Light</div>
<svg class="a" style="left:1534.5px;top:362.5px;" width="17" height="11" viewBox="0 0 17 11"><polyline points="2,2 8.5,9 15,2" fill="none" stroke="#f0f0f0" stroke-width="1.6"/></svg>
<div class="t" style="right:364px;top:396.34px;font-size:12px;color:#6a6a6a;text-decoration:line-through;text-decoration-color:#8a8a8a;">Style name</div>
<div class="a" style="left:1362px;top:388px;width:196px;height:27px;background:#2c2e30;"></div>
<div class="t" style="left:1368px;top:396.34px;font-size:12px;color:#707070;">Regular</div>
<svg class="a" style="left:1534.5px;top:396.5px;" width="17" height="11" viewBox="0 0 17 11"><polyline points="2,2 8.5,9 15,2" fill="none" stroke="#cfcfcf" stroke-width="1.5"/></svg>
<div class="a" style="left:1237px;top:418px;width:339px;height:33px;background:#654f27;"></div>
<div class="a" style="left:1237px;top:451px;width:339px;height:2px;background:#252525;"></div>
<div class="t" style="right:364px;top:430.34px;font-size:12px;color:#d0d0d0;">Size</div>
<div class="a" style="left:1362px;top:421px;width:75px;height:28px;background:#654f27;border:1px solid #5b4622;border-radius:0px;"></div>
<div class="t" style="right:255px;top:429.84px;font-size:12px;color:#6ea2d0;">20</div>
<div class="a" style="left:1483px;top:421px;width:75px;height:28px;background:#654f27;border:1px solid #5b4622;border-radius:0px;"></div>
<div class="t" style="left:1489px;top:429.84px;font-size:12px;color:#d0d0d0;">px</div>
<svg class="a" style="left:1534.5px;top:429.5px;" width="17" height="11" viewBox="0 0 17 11"><polyline points="2,2 8.5,9 15,2" fill="none" stroke="#f0f0f0" stroke-width="1.6"/></svg>
<div class="a" style="left:1237px;top:453px;width:339px;height:33px;background:#654f27;"></div>
<div class="t" style="right:364px;top:464.34px;font-size:12px;color:#d0d0d0;">Text color</div>
<div class="a" style="left:1363px;top:456px;width:73px;height:27px;background:#fff8f2;"></div>
<div class="a" style="left:1483px;top:455px;width:75px;height:28px;background:#654f27;border:1px solid #5b4622;border-radius:0px;"></div>
<div class="t" style="left:1489px;top:463.84px;font-size:12px;color:#b2ab9a;transform:scaleX(1.1722);transform-origin:left;">#ffffff</div>
<div class="t" style="right:364px;top:498.34px;font-size:12px;color:#d0d0d0;">Weight</div>
<div class="a" style="left:1362px;top:490px;width:196px;height:28px;background:#2a2a2a;border:1px solid #141414;border-radius:0px;"></div>
<div class="t" style="left:1368px;top:498.34px;font-size:12px;color:#dcdcdc;">Normal</div>
<svg class="a" style="left:1534.5px;top:498.5px;" width="17" height="11" viewBox="0 0 17 11"><polyline points="2,2 8.5,9 15,2" fill="none" stroke="#f0f0f0" stroke-width="1.6"/></svg>
<div class="t" style="right:364px;top:532.34px;font-size:12px;color:#d0d0d0;">Emphasis</div>
<div class="a" style="left:1362px;top:523px;width:29px;height:29px;background:#262626;border:1px solid #151515;border-radius:0px;"></div>
<div class="t" style="left:1076.5px;width:600px;text-align:center;top:531.15px;font-size:14px;color:#f4f4f4;font-weight:700;">B</div>
<div class="a" style="left:1412px;top:523px;width:29px;height:29px;background:#262626;border:1px solid #151515;border-radius:0px;"></div>
<div class="t" style="left:1126.5px;width:600px;text-align:center;top:531.15px;font-size:14px;color:#f4f4f4;font-weight:700;font-style:italic">i</div>
<div class="a" style="left:1488px;top:524px;width:27px;height:27px;background:#2c2e30;"></div>
<div class="t" style="left:1201.5px;width:600px;text-align:center;top:530.84px;font-size:12px;color:#c8c8c8;">U</div>
<div class="a" style="left:1495.5px;top:542.5px;width:12px;height:1.2px;background:#b8b8b8;"></div>
<div class="a" style="left:1538px;top:524px;width:27px;height:27px;background:#2c2e30;"></div>
<div class="t" style="left:1251.5px;width:600px;text-align:center;top:531.84px;font-size:12px;color:#c8c8c8;">S</div>
<div class="a" style="left:1545px;top:537px;width:13px;height:1px;background:#c8c8c8;"></div>
<div class="t" style="right:364px;top:566.34px;font-size:12px;color:#d0d0d0;">Alignment H</div>
<div class="a" style="left:1362px;top:557px;width:113px;height:29px;background:#262626;border:1px solid #151515;border-radius:0px;"></div>
<div class="a" style="left:1390px;top:557px;width:1px;height:29px;background:#151515;"></div>
<div class="a" style="left:1418px;top:557px;width:1px;height:29px;background:#151515;"></div>
<div class="a" style="left:1446px;top:557px;width:1px;height:29px;background:#151515;"></div>
<svg class="a" style="left:1371px;top:565px;" width="12" height="14" viewBox="0 0 12 14"><rect x="0" y="0" width="8" height="1.8" fill="#3aa0d8"/><rect x="0" y="3.3" width="6" height="1.8" fill="#3aa0d8"/><rect x="0" y="6.6" width="8" height="1.8" fill="#3aa0d8"/><rect x="0" y="9.9" width="11" height="1.8" fill="#3aa0d8"/></svg>
<svg class="a" style="left:1399px;top:565px;" width="12" height="14" viewBox="0 0 12 14"><rect x="0" y="0" width="11" height="1.8" fill="#e8e8e8"/><rect x="2" y="3.3" width="7" height="1.8" fill="#e8e8e8"/><rect x="0" y="6.6" width="11" height="1.8" fill="#e8e8e8"/><rect x="1" y="9.9" width="9" height="1.8" fill="#e8e8e8"/></svg>
<svg class="a" style="left:1427px;top:565px;" width="12" height="14" viewBox="0 0 12 14"><rect x="0" y="0" width="11" height="1.8" fill="#e8e8e8"/><rect x="3" y="3.3" width="8" height="1.8" fill="#e8e8e8"/><rect x="0" y="6.6" width="11" height="1.8" fill="#e8e8e8"/><rect x="1" y="9.9" width="10" height="1.8" fill="#e8e8e8"/></svg>
<svg class="a" style="left:1455px;top:565px;" width="12" height="14" viewBox="0 0 12 14"><rect x="0" y="0" width="11" height="1.8" fill="#e8e8e8"/><rect x="0" y="3.3" width="11" height="1.8" fill="#e8e8e8"/><rect x="0" y="6.6" width="11" height="1.8" fill="#e8e8e8"/><rect x="0" y="9.9" width="11" height="1.8" fill="#e8e8e8"/></svg>
<div class="t" style="right:364px;top:600.34px;font-size:12px;color:#d0d0d0;">Alignment V</div>
<div class="a" style="left:1362px;top:591px;width:85px;height:29px;background:#262626;border:1px solid #151515;border-radius:0px;"></div>
<div class="a" style="left:1390px;top:591px;width:1px;height:29px;background:#151515;"></div>
<div class="a" style="left:1418px;top:591px;width:1px;height:29px;background:#151515;"></div>
<svg class="a" style="left:1370px;top:598px;" width="14" height="14" viewBox="0 0 14 14"><rect x="1" y="1" width="11" height="12" rx="2" fill="none" stroke="#3aa0d8" stroke-width="1.2"/><rect x="3" y="4" width="7" height="1.5" fill="#3aa0d8"/></svg>
<svg class="a" style="left:1398px;top:598px;" width="14" height="14" viewBox="0 0 14 14"><rect x="1" y="1" width="11" height="12" rx="2" fill="none" stroke="#e0e0e0" stroke-width="1.2"/><rect x="3" y="6" width="4" height="1.5" fill="#e0e0e0"/><rect x="3" y="8.5" width="7" height="1.5" fill="#e0e0e0"/></svg>
<svg class="a" style="left:1426px;top:598px;" width="14" height="14" viewBox="0 0 14 14"><rect x="1" y="1" width="11" height="12" rx="2" fill="none" stroke="#e0e0e0" stroke-width="1.2"/><rect x="3" y="8" width="4" height="1.5" fill="#e0e0e0"/><rect x="3" y="10.5" width="7" height="1.5" fill="#e0e0e0"/></svg>
<div class="t" style="right:364px;top:634.34px;font-size:12px;color:#6a6a6a;text-decoration:line-through;text-decoration-color:#8a8a8a;">Letter spacing</div>
<div class="a" style="left:1363px;top:626px;width:73px;height:27px;background:#2c2e30;"></div>
<div class="t" style="right:255px;top:634.34px;font-size:12px;color:#6a6a6a;">0,00</div>
<div class="t" style="right:364px;top:668.34px;font-size:12px;color:#6a6a6a;text-decoration:line-through;text-decoration-color:#8a8a8a;">Word spacing</div>
<div class="a" style="left:1363px;top:660px;width:73px;height:27px;background:#2c2e30;"></div>
<div class="t" style="right:255px;top:668.34px;font-size:12px;color:#6a6a6a;">0,00</div>
<div class="t" style="right:364px;top:702.34px;font-size:12px;color:#6a6a6a;text-decoration:line-through;text-decoration-color:#8a8a8a;">Line height</div>
<div class="a" style="left:1363px;top:694px;width:73px;height:27px;background:#2c2e30;"></div>
<div class="t" style="right:255px;top:702.34px;font-size:12px;color:#6a6a6a;">1,00</div>
<div class="a" style="left:1233px;top:732px;width:377px;height:21px;background:#333;"></div>
<svg class="a" style="left:1238px;top:740px;" width="9" height="6" viewBox="0 0 9 6"><path d="M0,0.5 L8,0.5 L4,5 Z" fill="#bdbdbd"/></svg>
<div class="t" style="left:1255px;top:736.11px;font-size:13.1px;color:#d0d0d0;transform:scaleX(0.7727);transform-origin:left;">TEXT EXTRAS</div>
<div class="t" style="right:364px;top:772.34px;font-size:12px;color:#d0d0d0;">Wrap mode</div>
<div class="a" style="left:1362px;top:764px;width:196px;height:28px;background:#2a2a2a;border:1px solid #141414;border-radius:0px;"></div>
<div class="t" style="left:1368px;top:772.34px;font-size:12px;color:#dcdcdc;">NoWrap</div>
<svg class="a" style="left:1534.5px;top:772.5px;" width="17" height="11" viewBox="0 0 17 11"><polyline points="2,2 8.5,9 15,2" fill="none" stroke="#f0f0f0" stroke-width="1.6"/></svg>
<div class="t" style="right:364px;top:806.34px;font-size:12px;color:#d0d0d0;">Elide</div>
<div class="a" style="left:1362px;top:798px;width:196px;height:28px;background:#2a2a2a;border:1px solid #141414;border-radius:0px;"></div>
<div class="t" style="left:1368px;top:806.34px;font-size:12px;color:#dcdcdc;">ElideNone</div>
<svg class="a" style="left:1534.5px;top:806.5px;" width="17" height="11" viewBox="0 0 17 11"><polyline points="2,2 8.5,9 15,2" fill="none" stroke="#f0f0f0" stroke-width="1.6"/></svg>
<div class="t" style="right:364px;top:840.34px;font-size:12px;color:#6a6a6a;text-decoration:line-through;text-decoration-color:#8a8a8a;">Format</div>
<div class="a" style="left:1362px;top:832px;width:196px;height:27px;background:#2c2e30;"></div>
<div class="t" style="left:1368px;top:840.34px;font-size:12px;color:#707070;">AutoText</div>
<svg class="a" style="left:1534.5px;top:840.5px;" width="17" height="11" viewBox="0 0 17 11"><polyline points="2,2 8.5,9 15,2" fill="none" stroke="#cfcfcf" stroke-width="1.5"/></svg>
<div class="t" style="right:364px;top:874.34px;font-size:12px;color:#6a6a6a;text-decoration:line-through;text-decoration-color:#8a8a8a;">Render type</div>
<div class="a" style="left:1362px;top:866px;width:196px;height:27px;background:#2c2e30;"></div>
<div class="t" style="left:1368px;top:874.34px;font-size:12px;color:#707070;">QtRendering</div>
<svg class="a" style="left:1534.5px;top:874.5px;" width="17" height="11" viewBox="0 0 17 11"><polyline points="2,2 8.5,9 15,2" fill="none" stroke="#cfcfcf" stroke-width="1.5"/></svg>
<div class="t" style="right:364px;top:908.34px;font-size:12px;color:#6a6a6a;text-decoration:line-through;text-decoration-color:#8a8a8a;">Render type ...</div>
<div class="a" style="left:1362px;top:900px;width:196px;height:27px;background:#2c2e30;"></div>
<div class="t" style="left:1368px;top:908.34px;font-size:12px;color:#707070;">DefaultRenderTypeQuality</div>
<svg class="a" style="left:1534.5px;top:908.5px;" width="17" height="11" viewBox="0 0 17 11"><polyline points="2,2 8.5,9 15,2" fill="none" stroke="#cfcfcf" stroke-width="1.5"/></svg>
<div class="t" style="right:364px;top:942.34px;font-size:12px;color:#6a6a6a;text-decoration:line-through;text-decoration-color:#8a8a8a;">Line height ...</div>
<div class="a" style="left:1362px;top:934px;width:196px;height:27px;background:#2c2e30;"></div>
<div class="t" style="left:1368px;top:942.34px;font-size:12px;color:#707070;">ProportionalHeight</div>
<svg class="a" style="left:1534.5px;top:942.5px;" width="17" height="11" viewBox="0 0 17 11"><polyline points="2,2 8.5,9 15,2" fill="none" stroke="#cfcfcf" stroke-width="1.5"/></svg>
<div class="t" style="right:364px;top:976.34px;font-size:12px;color:#6a6a6a;text-decoration:line-through;text-decoration-color:#8a8a8a;">Size mode</div>
<div class="a" style="left:1362px;top:968px;width:196px;height:27px;background:#2c2e30;"></div>
<div class="t" style="left:1368px;top:976.34px;font-size:12px;color:#707070;">FixedSize</div>
<svg class="a" style="left:1534.5px;top:976.5px;" width="17" height="11" viewBox="0 0 17 11"><polyline points="2,2 8.5,9 15,2" fill="none" stroke="#cfcfcf" stroke-width="1.5"/></svg>
<div class="a" style="left:1363px;top:1002px;width:73px;height:27px;background:#2c2e30;"></div>
<div class="a" style="left:1484px;top:1002px;width:73px;height:27px;background:#2c2e30;"></div>
<div class="a" style="left:1233px;top:1009px;width:387px;height:41px;background:#202020;"></div>
<svg class="a" style="left:1160px;top:320px" width="100" height="100" viewBox="0 0 1128 1128"><polygon points="495,138 548,262 556,318 885,132 940,148 970,200 960,252 795,348 822,425 852,550 862,645 846,697 836,738 560,888 545,865 425,925 322,950 109,598 214,539 194,498 280,453 245,424 325,383 294,343 389,298 360,259 405,239 395,208" fill="#fff" stroke="#959595" stroke-width="60" stroke-linejoin="miter"/><polygon points="495,138 548,262 556,318 885,132 940,148 970,200 960,252 795,348 822,425 852,550 862,645 846,697 836,738 560,888 545,865 425,925 322,950 109,598 214,539 194,498 280,453 245,424 325,383 294,343 389,298 360,259 405,239 395,208" fill="#fff" stroke="#000" stroke-width="22" stroke-linejoin="miter"/><g fill="none" stroke="#000" stroke-width="22"><polyline points="437,401 526,351 536,306"/><polyline points="625,437 795,350"/><polyline points="680,537 795,472 845,548"/><polyline points="709,656 820,597 858,660"/></g></svg>
<svg class="a" style="left:1165px;top:435px" width="100" height="100" viewBox="0 0 1128 1128"><polygon points="495,138 548,262 556,318 885,132 940,148 970,200 960,252 795,348 822,425 852,550 862,645 846,697 836,738 560,888 545,865 425,925 322,950 109,598 214,539 194,498 280,453 245,424 325,383 294,343 389,298 360,259 405,239 395,208" fill="#fff" stroke="#959595" stroke-width="60" stroke-linejoin="miter"/><polygon points="495,138 548,262 556,318 885,132 940,148 970,200 960,252 795,348 822,425 852,550 862,645 846,697 836,738 560,888 545,865 425,925 322,950 109,598 214,539 194,498 280,453 245,424 325,383 294,343 389,298 360,259 405,239 395,208" fill="#fff" stroke="#000" stroke-width="22" stroke-linejoin="miter"/><g fill="none" stroke="#000" stroke-width="22"><polyline points="437,401 526,351 536,306"/><polyline points="625,437 795,350"/><polyline points="680,537 795,472 845,548"/><polyline points="709,656 820,597 858,660"/></g></svg>
<svg class="a" style="left:1600px;top:1030px;" width="21" height="21" viewBox="0 0 21 21"><path d="M4,21 L20,5 M8,21 L20,9 M12,21 L20,13 M16,21 L20,17" stroke="#6a6a6a" stroke-width="0.9"/></svg></body></html>
